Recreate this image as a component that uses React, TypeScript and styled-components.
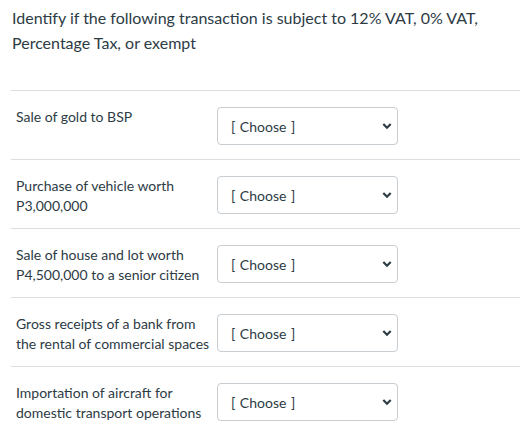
import React from "react";
import styled, { createGlobalStyle } from "styled-components";

const Global = createGlobalStyle`
  html, body {
    margin: 0;
    padding: 0;
    background: #ffffff;
  }
  body {
    font-family: Lato, "Noto Sans", sans-serif;
    color: #2d3b45;
  }
`;

const Page = styled.div`
  width: 520px;
  padding: 5px 0 0 11px;
  box-sizing: border-box;
`;

const Question = styled.p`
  margin: 0 0 35px 1px;
  font-size: 16px;
  line-height: 25px;
  padding-right: 20px;
`;

const Row = styled.div`
  display: flex;
  align-items: flex-start;
  border-top: 1px solid #dcdfe1;
  padding: 16px 0 0 5px;
  height: 52px;
  box-sizing: content-box;
`;

const Label = styled.div`
  width: 201px;
  flex: none;
  font-size: 14px;
  line-height: 20px;
  padding-right: 6px;
  box-sizing: border-box;
`;

const SelectBox = styled.div`
  width: 181px;
  height: 38px;
  box-sizing: border-box;
  border: 1px solid #c7cdd1;
  border-radius: 4px;
  display: flex;
  align-items: center;
  justify-content: space-between;
  padding: 0 5px 0 13px;
  font-size: 14px;
  color: #2d3b45;
  background: #fff;
  word-spacing: 1px;
`;

const Chevron = () => (
  <svg width="10" height="8" viewBox="0 0 10 8" aria-hidden>
    <path d="M1.3 2 L5 5.7 L8.7 2" fill="none" stroke="#2d3b45" strokeWidth="2.2" />
  </svg>
);

const items = [
  "Sale of gold to BSP",
  "Purchase of vehicle worth P3,000,000",
  "Sale of house and lot worth P4,500,000 to a senior citizen",
  "Gross receipts of a bank from the rental of commercial spaces",
  "Importation of aircraft for domestic transport operations",
];

export default function App() {
  return (
    <>
      <Global />
      <Page>
        <Question>
          Identify if the following transaction is subject to 12% VAT, 0% VAT, Percentage Tax, or exempt
        </Question>
        {items.map((t) => (
          <Row key={t}>
            <Label>{t}</Label>
            <SelectBox>
              <span>[ Choose ]</span>
              <Chevron />
            </SelectBox>
          </Row>
        ))}
      </Page>
    </>
  );
}
